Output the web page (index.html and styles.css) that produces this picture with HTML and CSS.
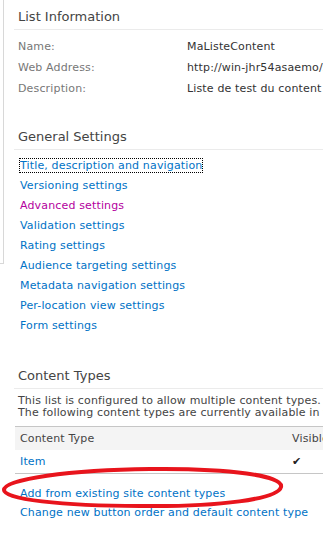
FILE: index.html
```html
<!DOCTYPE html>
<html lang="en">
<head>
  <meta charset="UTF-8" />
  <title>List Settings</title>
  <link rel="stylesheet" href="styles.css">
</head>
<body>
  <div class="page">
    <div class="side-edge"></div>

    <div class="content">
      <section class="block block-info">
        <h2>List Information</h2>
        <table class="info">
          <tr><td class="lbl">Name:</td><td class="val">MaListeContent</td></tr>
          <tr><td class="lbl">Web Address:</td><td class="val">http://win-jhr54asaemo/sites/test/Lists/MaListeContent/AllItems.aspx</td></tr>
          <tr><td class="lbl">Description:</td><td class="val">Liste de test du content type</td></tr>
        </table>
      </section>

      <section class="block block-general">
        <h2>General Settings</h2>
        <ul class="links">
          <li><a href="#" class="focused">Title, description and navigation</a></li>
          <li><a href="#">Versioning settings</a></li>
          <li><a href="#" class="visited">Advanced settings</a></li>
          <li><a href="#">Validation settings</a></li>
          <li><a href="#">Rating settings</a></li>
          <li><a href="#">Audience targeting settings</a></li>
          <li><a href="#">Metadata navigation settings</a></li>
          <li><a href="#">Per-location view settings</a></li>
          <li><a href="#">Form settings</a></li>
        </ul>
      </section>

      <section class="block block-types">
        <h2>Content Types</h2>
        <p class="intro">This list is configured to allow multiple content types. Use content types to specify<br>The following content types are currently available in this list:</p>
        <table class="types">
          <tr class="head"><td class="c-name">Content Type</td><td class="c-vis">Visible on New Button</td></tr>
          <tr class="row"><td class="c-name"><a href="#">Item</a></td><td class="c-vis check">&#10004;</td></tr>
        </table>
        <ul class="links links-types">
          <li><a href="#">Add from existing site content types</a></li>
          <li><a href="#">Change new button order and default content type</a></li>
        </ul>
      </section>
    </div>

    <svg class="mark" width="290" height="46" viewBox="0 0 290 46">
      <path d="M150 3 C 230 2, 284 10, 281 21 C 278 33, 220 41, 140 40 C 60 40, 4 33, 4 24 C 4 13, 70 4, 150 3 Z"
            fill="none" stroke="#e8141c" stroke-width="4" />
    </svg>
  </div>
</body>
</html>
```

FILE: styles.css
```css
body {
  margin: 0;
  background: #fff;
  font-family: "DejaVu Sans", Verdana, sans-serif;
  font-size: 11px;
  letter-spacing: 0.15px;
  color: #444;
}

.page {
  position: relative;
  display: flex;
  width: 323px;
  height: 534px;
  overflow: hidden;
}

.side-edge {
  flex: none;
  width: 3px;
  height: 263px;
  border-right: 1px solid #d8d8d8;
  border-bottom: 1px solid #d8d8d8;
}

.content {
  flex: none;
  width: 700px;
  padding-left: 10px;
}

h2 {
  margin: 0;
  padding: 0 0 4px 4px;
  font-size: 13px;
  font-weight: normal;
  letter-spacing: 0;
  color: #444;
  border-bottom: 1px solid #ebebeb;
  line-height: 17px;
}

.block-info {
  padding-top: 8px;
}

.block-general {
  padding-top: 29px;
}

.block-types {
  padding-top: 31px;
}

/* List information */
.info {
  border-collapse: collapse;
  margin-top: 6px;
}

.info td {
  padding: 0;
  height: 21px;
  white-space: nowrap;
}

.info .lbl {
  width: 169px;
  padding-left: 4px;
  color: #777;
}

.info .val {
  color: #333;
}

/* Links */
.links {
  list-style: none;
  margin: 6px 0 0;
  padding: 0 0 0 6px;
}

.links li {
  height: 20px;
  line-height: 20px;
  white-space: nowrap;
}

a {
  color: #0072c6;
  text-decoration: none;
}

a.visited {
  color: #b4009e;
}

a.focused {
  outline: 1px dotted #000;
}

/* Content types */
.intro {
  margin: 6px 0 0 4px;
  line-height: 12px;
  color: #444;
  white-space: nowrap;
}

.types {
  border-collapse: collapse;
  margin-top: 7px;
  margin-left: 1px;
  width: 650px;
}

.types td {
  padding: 0 0 0 5px;
  white-space: nowrap;
}

.types .head td {
  height: 23px;
  background: #f4f4f4;
  border-top: 1px solid #c6c6c6;
  color: #444;
}

.types .row td {
  height: 23px;
  border-bottom: 1px solid #c6c6c6;
}

.types .c-name {
  width: 267px;
}

.types .check {
  padding-left: 5px;
  color: #222;
}

.links-types {
  margin-top: 10px;
}

.links-types li {
  height: 19px;
  line-height: 19px;
}

.mark {
  position: absolute;
  left: 0;
  top: 466px;
}
```
